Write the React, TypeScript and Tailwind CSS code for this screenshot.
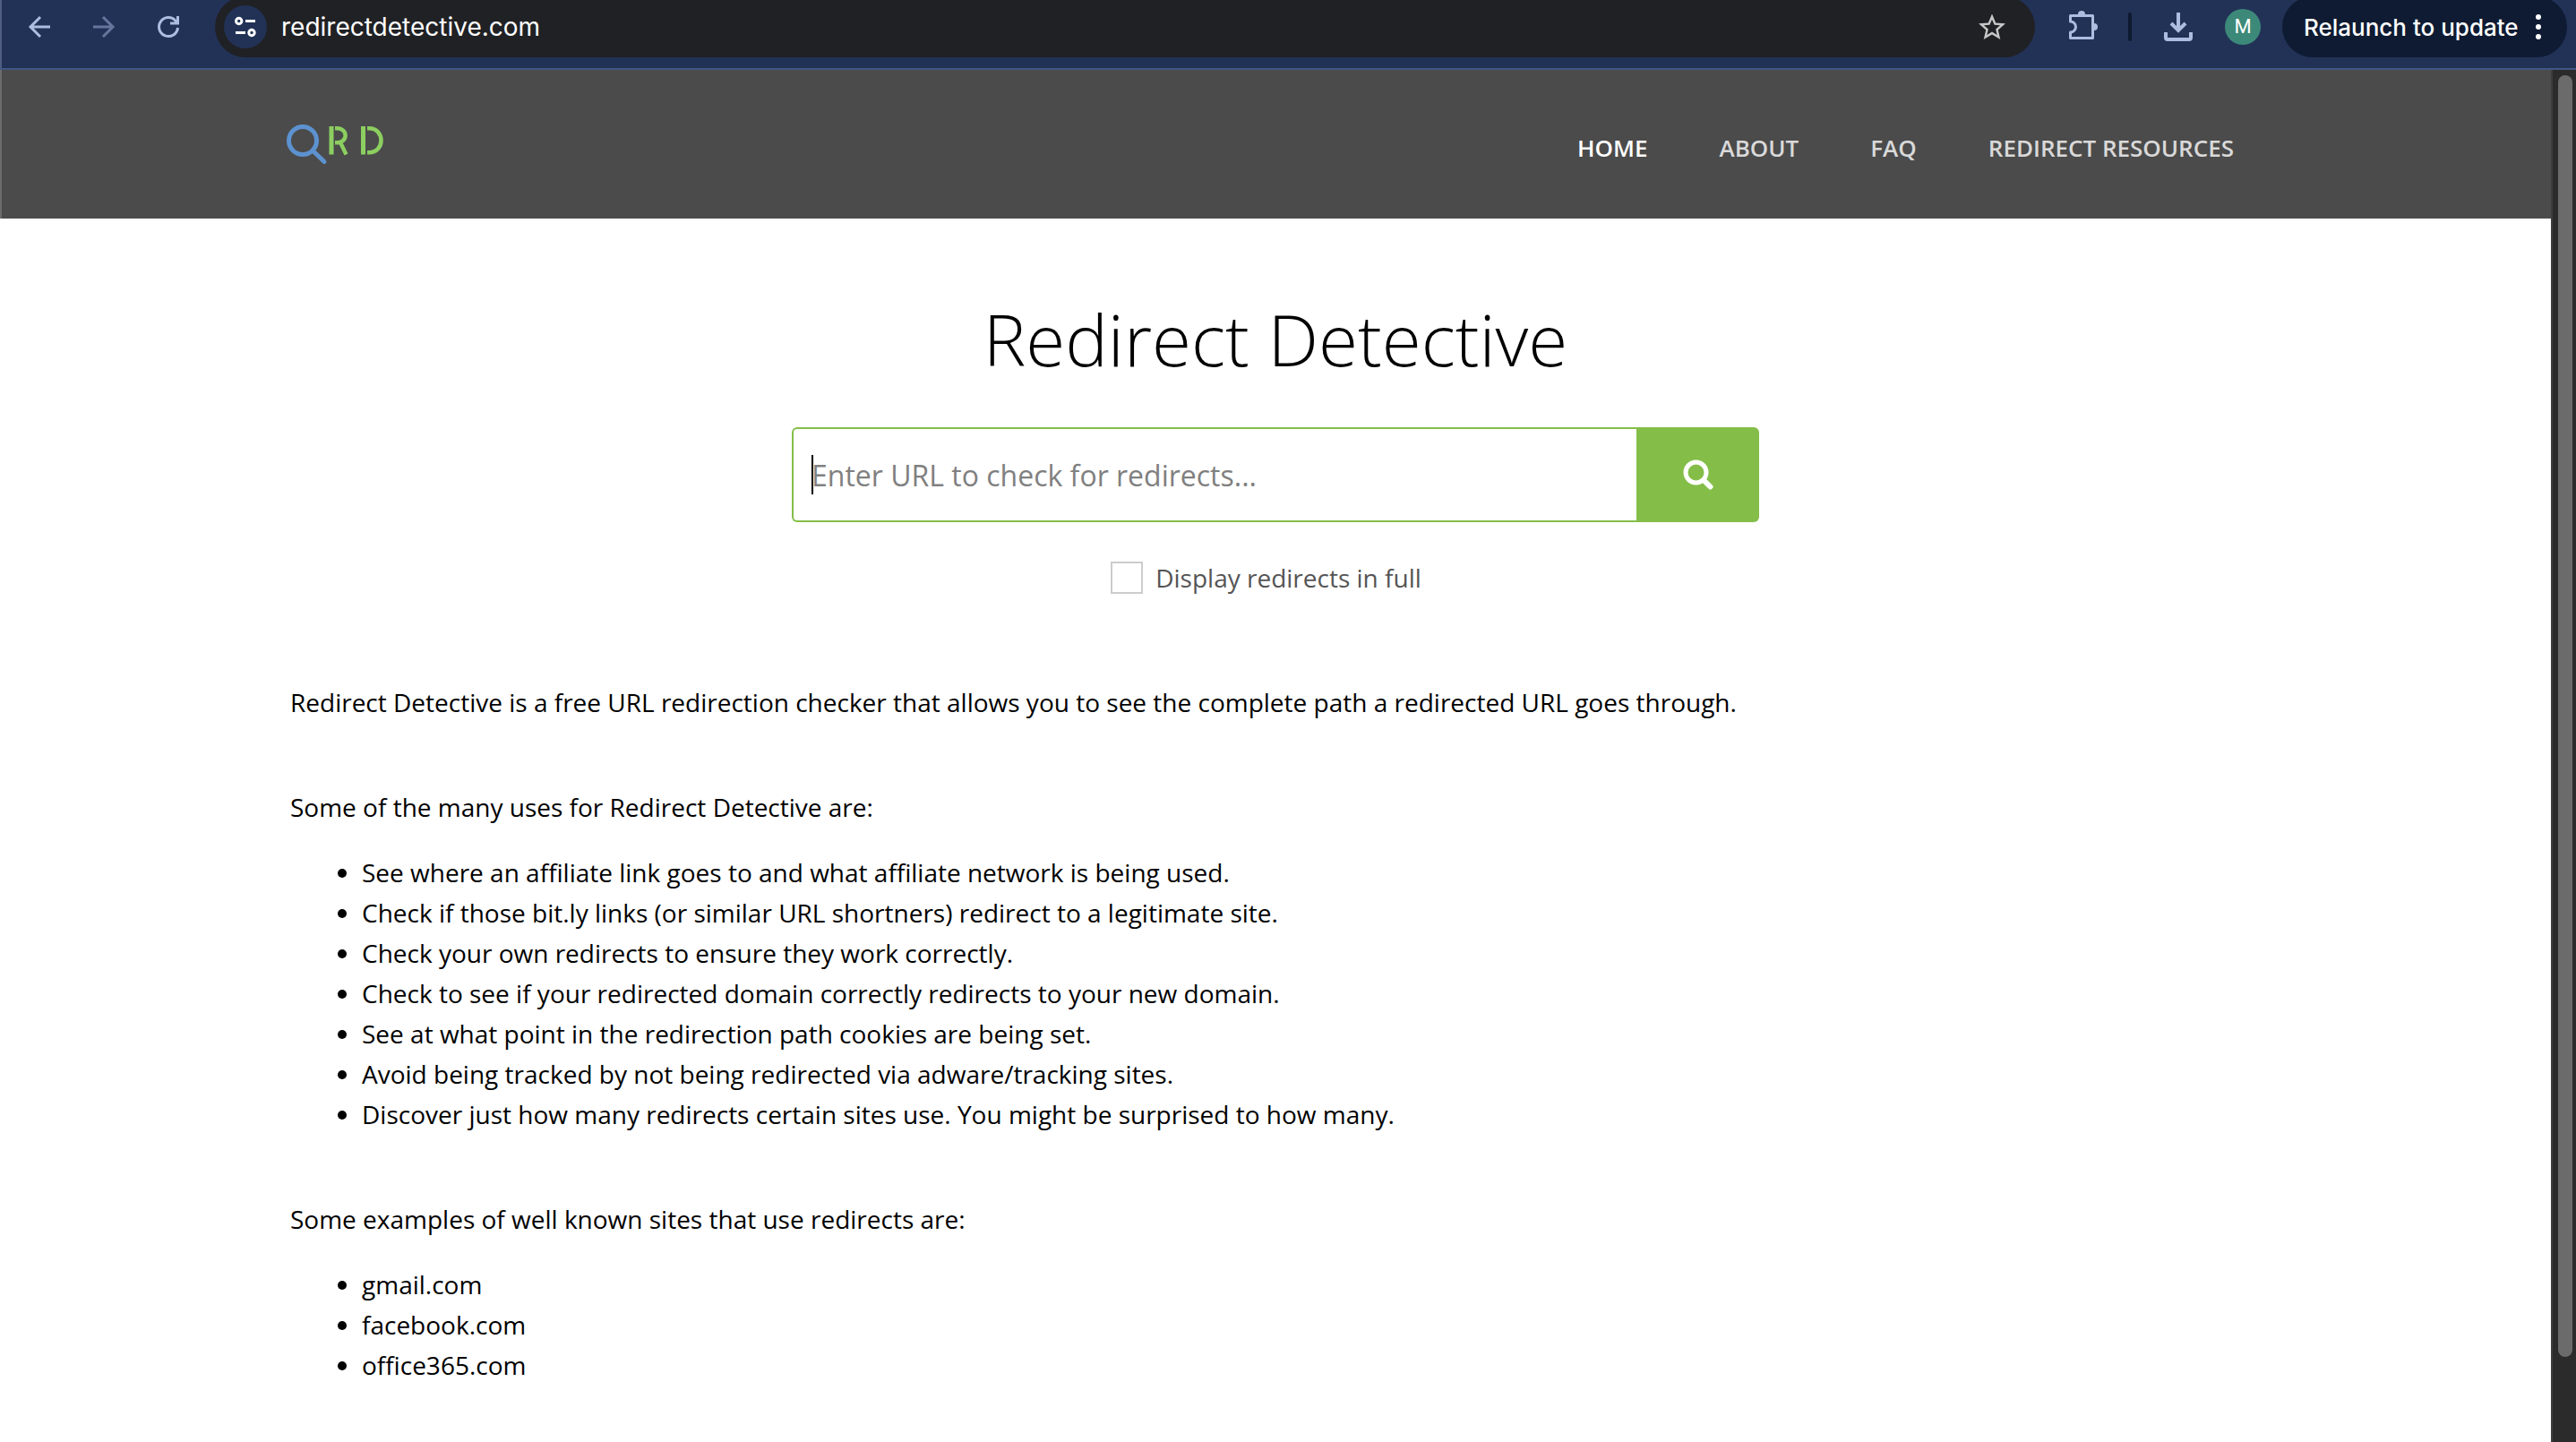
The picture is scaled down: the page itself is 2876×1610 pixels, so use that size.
import type { ReactNode } from "react";

const navItems = [
  { label: "HOME", active: true },
  { label: "ABOUT", active: false },
  { label: "FAQ", active: false },
  { label: "REDIRECT RESOURCES", active: false },
];

const uses = [
  "See where an affiliate link goes to and what affiliate network is being used.",
  "Check if those bit.ly links (or similar URL shortners) redirect to a legitimate site.",
  "Check your own redirects to ensure they work correctly.",
  "Check to see if your redirected domain correctly redirects to your new domain.",
  "See at what point in the redirection path cookies are being set.",
  "Avoid being tracked by not being redirected via adware/tracking sites.",
  "Discover just how many redirects certain sites use. You might be surprised to how many.",
];

const examples = ["gmail.com", "facebook.com", "office365.com"];

function IconButton({ label, className, children }: { label: string; className?: string; children: ReactNode }) {
  return (
    <button type="button" aria-label={label} className={`flex shrink-0 items-center justify-center ${className ?? ""}`}>
      {children}
    </button>
  );
}

function BrowserBar() {
  return (
    <div className="flex h-[78px] shrink-0 items-start overflow-hidden border-b-2 border-l-2 border-b-[#405685] border-l-[#4e5d80] bg-[#223257] pr-[10px] text-[#adbde0]">
      <IconButton label="Back" className="ml-[26px] h-[60px] w-8">
        <svg width="32" height="32" viewBox="0 0 32 32" fill="none" stroke="currentColor" strokeWidth="3">
          <path d="M28 16H6M17 5L6 16l11 11" />
        </svg>
      </IconButton>
      <IconButton label="Forward" className="ml-10 h-[60px] w-8 text-[#66759c]">
        <svg width="32" height="32" viewBox="0 0 32 32" fill="none" stroke="currentColor" strokeWidth="3">
          <path d="M4 16h22M15 5l11 11-11 11" />
        </svg>
      </IconButton>
      <IconButton label="Reload" className="ml-10 h-[60px] w-8">
        <svg width="32" height="32" viewBox="0 0 32 32" fill="none" stroke="currentColor" strokeWidth="3">
          <path d="M26.500 17A10.500 10.500 0 1 1 24 9.200L26 12M26.500 4v8H18" />
        </svg>
      </IconButton>

      <div className="-mt-1 ml-9 flex h-[68px] flex-1 items-center rounded-full bg-[#202124]">
        <IconButton label="View site information" className="ml-[10px] h-12 w-12 rounded-full bg-[#223257] text-white">
          <svg width="28" height="28" viewBox="0 0 28 28" fill="none" stroke="currentColor" strokeWidth="3">
            <circle cx="6.700" cy="7.500" r="3.200" />
            <path d="M14 7.500h11M3 20.500h11" />
            <circle cx="21" cy="20.500" r="3.200" />
          </svg>
        </IconButton>
        <input
          aria-label="Address"
          defaultValue="redirectdetective.com"
          className="ml-4 min-w-0 flex-1 bg-transparent font-['Inter',sans-serif] text-[28px] leading-[60px] text-white outline-none"
        />
        <IconButton label="Bookmark this page" className="mr-[30px] w-9 text-[#c7c7c7]">
          <svg width="37" height="37" viewBox="0 0 24 24" fill="currentColor">
            <path d="M22 9.240l-7.190-.62L12 2 9.190 8.630 2 9.240l5.460 4.730L5.820 21 12 17.270 18.180 21l-1.630-7.030L22 9.240zM12 15.400l-3.760 2.270 1-4.280-3.320-2.880 4.380-.38L12 6.100l1.710 4.040 4.380.38-3.320 2.880 1 4.280L12 15.400z" />
          </svg>
        </IconButton>
      </div>

      <IconButton label="Extensions" className="ml-[34px] h-[60px] w-10">
        <svg width="40" height="40" viewBox="0 0 40 40" fill="none" stroke="currentColor" strokeWidth="3" strokeLinejoin="round">
          <path d="M5.500 14V7.500h25v25h-25V26a6 6 0 0 0 0-12z" />
          <path d="M14 6a4 4 0 0 1 8 0zM32 16a4 4 0 0 1 0 8z" fill="currentColor" stroke="none" />
        </svg>
      </IconButton>
      <div className="ml-[30px] mt-[14px] h-8 w-1 rounded-sm bg-[#0d1a30]" />
      <IconButton label="Downloads" className="ml-[34px] h-[60px] w-9">
        <svg width="36" height="36" viewBox="0 0 36 36" fill="none" stroke="currentColor" strokeWidth="4">
          <path d="M18 2v20M10 14l8 8 8-8M4 24v6a2 2 0 0 0 2 2h24a2 2 0 0 0 2-2v-6" />
        </svg>
      </IconButton>
      <button
        type="button"
        className="ml-[34px] mt-[10px] h-10 w-10 shrink-0 rounded-full bg-[#3d8979] font-[Roboto,sans-serif] text-[22px] leading-10 text-white"
      >
        M
      </button>
      <button
        type="button"
        className="-mt-1 ml-6 flex h-[68px] w-[318px] shrink-0 items-center justify-between rounded-full bg-[#0e1b32] pl-6 pr-[29px] font-['Inter',sans-serif] text-[26px] font-medium text-white"
      >
        Relaunch to update
        <svg width="6" height="28" viewBox="0 0 6 28" fill="currentColor" aria-hidden="true">
          <circle cx="3" cy="3" r="3" />
          <circle cx="3" cy="14" r="3" />
          <circle cx="3" cy="25" r="3" />
        </svg>
      </button>
    </div>
  );
}

function Logo() {
  return (
    <a href="#home" aria-label="Redirect Detective">
      <svg width="110" height="48" viewBox="0 0 110 48" fill="none">
        <g stroke="#5d92d0">
          <circle cx="18" cy="20" r="15.500" strokeWidth="5" />
          <path d="M29 31l13 12.500" strokeWidth="5" strokeLinecap="round" />
        </g>
        <g stroke="#8ccf60">
          <path d="M50 4v31.500M85.500 4v31.500" strokeWidth="5" />
          <path d="M54 6.200h3a8.600 8 0 0 1 0 16h-3M60 22l6.500 13.500" strokeWidth="4.400" />
          <path d="M90 6.200h2c18 0 18 27 0 27h-2" strokeWidth="4.600" />
        </g>
      </svg>
    </a>
  );
}

function SiteHeader() {
  return (
    <header className="flex h-[166px] shrink-0 items-center justify-between border-l-2 border-[#6b6b6b] bg-[#4b4b4b] pl-[318px] pr-[354px]">
      <Logo />
      <nav className="flex gap-20 pt-2 text-[26px] font-semibold text-[#d9d9d9]">
        {navItems.map((item) => (
          <a key={item.label} href="#" className={item.active ? "text-white" : ""}>
            {item.label}
          </a>
        ))}
      </nav>
    </header>
  );
}

function SearchForm() {
  return (
    <form className="flex flex-col items-center" onSubmit={(e) => e.preventDefault()}>
      <div className="flex h-[106px] w-[1080px]">
        <div className="flex flex-1 items-center rounded-l-md border-2 border-r-0 border-[#84be48] pl-5">
          <span className="h-11 w-0.5 bg-black" />
          <input
            aria-label="URL to check"
            placeholder="Enter URL to check for redirects..."
            className="-ml-0.5 h-full min-w-0 flex-1 text-[32px] outline-none placeholder:text-[#808080]"
          />
        </div>
        <button type="submit" aria-label="Check" className="flex w-[137px] items-center justify-center rounded-r-md bg-[#84be48] text-white">
          <svg width="34" height="34" viewBox="0 0 34 34" fill="none" stroke="currentColor">
            <circle cx="14.500" cy="14.500" r="11.500" strokeWidth="5" />
            <path d="M24 24l6.500 6.500" strokeWidth="6" strokeLinecap="round" />
          </svg>
        </button>
      </div>
      <label className="mt-[43px] flex items-center gap-[14px] pr-[21px] text-[28px] leading-[38px] text-[#555555]">
        <input type="checkbox" className="h-9 w-9 appearance-none border-2 border-[#cccccc] bg-white" />
        Display redirects in full
      </label>
    </form>
  );
}

function BulletList({ items }: { items: string[] }) {
  return (
    <ul className="mt-7 list-disc pl-20">
      {items.map((item) => (
        <li key={item}>{item}</li>
      ))}
    </ul>
  );
}

export default function App() {
  return (
    <div className="flex min-h-screen flex-col bg-white font-['Open_Sans',sans-serif] text-black">
      <BrowserBar />
      <div className="flex flex-1">
        <div className="flex min-w-0 flex-1 flex-col">
          <SiteHeader />
          <main className="flex flex-col pt-[78px]">
            <h1 className="text-center text-[80px] font-light leading-[112px]">Redirect Detective</h1>
            <div className="mt-[43px]">
              <SearchForm />
            </div>
            <div className="mt-[98px] px-[324px] text-[28px] leading-[45px]">
              <p>Redirect Detective is a free URL redirection checker that allows you to see the complete path a redirected URL goes through.</p>
              <p className="mt-[72px]">Some of the many uses for Redirect Detective are:</p>
              <BulletList items={uses} />
              <p className="mt-[72px]">Some examples of well known sites that use redirects are:</p>
              <BulletList items={examples} />
            </div>
          </main>
        </div>
        <div className="flex w-7 shrink-0 flex-col border-l-2 border-[#3d3d3d] bg-[#2b2b2b] pl-[6px] pt-[6px]">
          <div className="h-[1431px] w-4 rounded-full bg-[#6b6b6b]" />
        </div>
      </div>
    </div>
  );
}
